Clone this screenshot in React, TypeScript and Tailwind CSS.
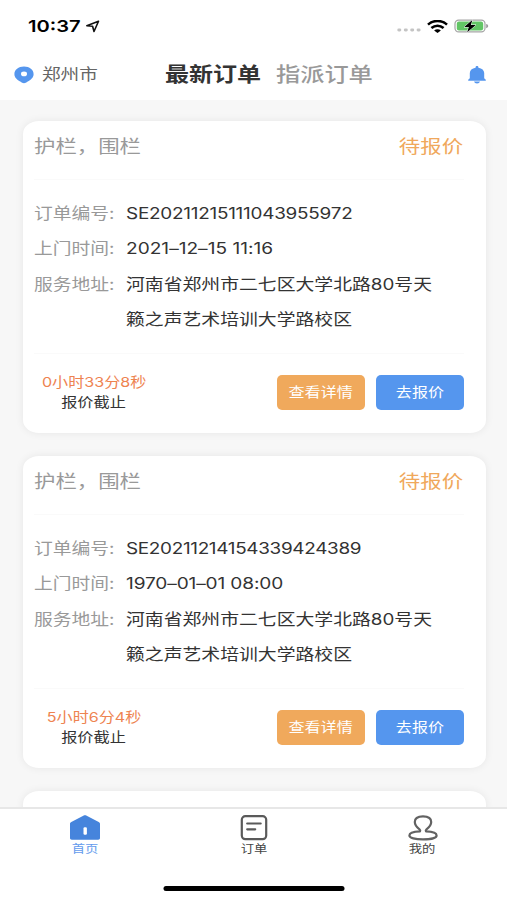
import React from "react";

type Order = {
  id: string;
  idSpacing: string;
  time: string;
  timeSpacing: string;
  countdown: string;
};

const orders: Order[] = [
  { id: "SE20211215111043955972", idSpacing: "tracking-[-0.2px]", time: "2021–12–15 11:16", timeSpacing: "tracking-[0.02px]", countdown: "0小时33分8秒" },
  { id: "SE20211214154339424389", idSpacing: "tracking-[-0.26px]", time: "1970–01–01 08:00", timeSpacing: "tracking-[-0.1px]", countdown: "5小时6分4秒" },
];

function Row({ label, children }: { label: string; children: React.ReactNode }) {
  return (
    <div className="flex h-[35.5px] items-center text-[15.5px]">
      <div className="w-[92.5px] shrink-0 text-[#999]">
        <span className="inline-block origin-left scale-x-[1.21] whitespace-nowrap">{label}</span>
      </div>
      <div className="text-[#333]">{children}</div>
    </div>
  );
}

function OrderCard({ order }: { order: Order }) {
  return (
    <article className="h-[312px] shrink-0 rounded-[16px/13px] bg-white pl-[11px] pr-[22px] shadow-[0_0_8px_rgba(0,0,0,0.07)]">
      <div className="flex h-[52px] items-center justify-between text-[17.7px]">
        <span className="origin-left scale-x-[1.21] text-[#999]">护栏，围栏</span>
        <span className="origin-right scale-x-[1.21] text-[#f0a85c]">待报价</span>
      </div>
      <div className="mt-1.5 h-px bg-[#fafafa]" />
      <div className="pt-[15.4px]">
        <Row label="订单编号:">
          <span className={`inline-block origin-left scale-x-[1.22] ${order.idSpacing}`}>{order.id}</span>
        </Row>
        <Row label="上门时间:">
          <span className={`inline-block origin-left scale-x-[1.23] ${order.timeSpacing}`}>{order.time}</span>
        </Row>
        <Row label="服务地址:">
          <span className="inline-block origin-left scale-x-[1.215] whitespace-nowrap">河南省郑州市二七区大学北路80号天</span>
        </Row>
        <Row label="">
          <span className="inline-block origin-left scale-x-[1.215] whitespace-nowrap">籁之声艺术培训大学路校区</span>
        </Row>
      </div>
      <div className="mt-[15.6px] h-px bg-[#fafafa]" />
      <div className="mt-[21px] flex h-[35px] items-center">
        <div className="flex w-[120.5px] flex-col items-center text-[13.3px] leading-5">
          <span className="scale-x-[1.21] whitespace-nowrap text-[#ee8350]">{order.countdown}</span>
          <span className="scale-x-[1.22] whitespace-nowrap text-[#333]">报价截止</span>
        </div>
        <div className="-mr-[0.5px] ml-auto flex gap-[11px] text-[13.3px] text-white">
          <button className="h-[35px] w-[88px] rounded-[5px] bg-[#f0a95c]">
            <span className="inline-block scale-x-[1.21]">查看详情</span>
          </button>
          <button className="h-[35px] w-[88px] rounded-[5px] bg-[#5596ee]">
            <span className="inline-block scale-x-[1.21]">去报价</span>
          </button>
        </div>
      </div>
    </article>
  );
}

function StatusBar() {
  return (
    <div className="flex h-[52px] items-center pl-[28px] pr-[18px]">
      <span className="inline-block origin-left scale-x-[1.22] text-[16.5px] font-semibold text-black">10:37</span>
      <svg className="ml-[13.5px] h-[13px] w-[15px]" viewBox="0 0 15 13" fill="none" stroke="#111" strokeWidth="1.6" strokeLinejoin="round">
        <path d="M13.5 1.2 1.8 5.7 7.6 6.3 9 11.5Z" />
      </svg>
      <div className="ml-auto flex items-center">
        <svg className="mt-2 h-[4px] w-[24px]" viewBox="0 0 24 4" fill="#c4c4c4">
          <rect x="0.3" y="0.5" width="4" height="3" rx="1.4" />
          <rect x="6.8" y="0.5" width="4" height="3" rx="1.4" />
          <rect x="13.2" y="0.5" width="4" height="3" rx="1.4" />
          <rect x="19.6" y="0.5" width="4" height="3" rx="1.4" />
        </svg>
        <svg className="ml-[6px] h-[13px] w-[21px]" viewBox="0 0 21 13" fill="none" stroke="#000" strokeWidth="2.6">
          <path d="M1 4.6C6.4-.2 14.6-.2 20 4.6" />
          <path d="M4.4 8.1c3.6-3 8.6-3 12.2 0" />
          <path d="M7.1 10.4c2-1.6 4.8-1.6 6.8 0L10.5 12.9Z" fill="#000" stroke="none" />
        </svg>
        <svg className="ml-[6px] h-[14px] w-[35px]" viewBox="0 0 35 14">
          <rect x="1" y="1.1" width="30" height="11.8" rx="3.6" fill="#fff" stroke="#a5a5a5" strokeWidth="1.2" />
          <rect x="2.8" y="2.6" width="26.4" height="8.8" rx="2.2" fill="#62c565" />
          <path d="M32.2 5v4.2c1.3-.4 2-1.2 2-2.1s-.7-1.7-2-2.1Z" fill="#999" />
          <path d="M18.3 1 10.2 8h4.6L13.2 13.2l8.6-7.2h-4.9Z" fill="#000" stroke="#fff" strokeWidth="1" paintOrder="stroke" />
        </svg>
      </div>
    </div>
  );
}

function TopBar() {
  return (
    <div className="flex h-[46px] items-center pl-[14px] pr-[21px]">
      <svg className="h-[18px] w-[20px]" viewBox="0 0 20 18">
        <path d="M10 .6C4.5.6.4 3.9.4 8.2c0 3.4 3 5.7 5.9 7.4 1.5.9 2.3 1.7 3.7 1.7s2.2-.8 3.7-1.7c2.9-1.7 5.9-4 5.9-7.4C19.6 3.9 15.5.6 10 .6Z" fill="#5596ee" />
        <ellipse cx="10" cy="7.9" rx="3" ry="2.4" fill="#fff" />
      </svg>
      <div className="ml-[7.5px] w-[123.5px] text-[15.5px] text-[#666]">
        <span className="inline-block origin-left scale-x-[1.2]">郑州市</span>
      </div>
      <div className="w-[111px] text-[20px] font-semibold text-[#333]">
        <span className="inline-block origin-left scale-x-[1.2] whitespace-nowrap">最新订单</span>
      </div>
      <div className="text-[20px] font-medium text-[#999]">
        <span className="inline-block origin-left scale-x-[1.21] whitespace-nowrap">指派订单</span>
      </div>
      <svg className="ml-auto h-[18px] w-[18px]" viewBox="0 0 18 18" fill="#5596ee">
        <path d="M7.6 1.3C7.6.6 8.2.1 9 .1s1.4.5 1.4 1.2v.4c3.600.6 5.800 2.500 5.800 5.300v5.200l1.600 1.500v1H.2v-1l1.600-1.500V7c0-2.800 2.200-4.700 5.800-5.300Z" />
        <path d="M6 15.500h6c-.4 1.200-1.500 1.900-3 1.900s-2.600-.7-3-1.900Z" />
      </svg>
    </div>
  );
}

function TabBar() {
  return (
    <nav className="flex h-[93.5px] shrink-0 flex-col border-t-2 border-[#e7e7e7] bg-white">
      <div className="grid grid-cols-3 pt-[6px] text-[11.1px] leading-4 text-[#444]">
        <div className="flex flex-col items-center text-[#639bed]">
          <svg className="h-[26px] w-[30px]" viewBox="0 0 30 26">
            <path d="M13.3.8c1.2-.6 2.2-.6 3.4 0l12 6.1c.9.5 1.3 1 1.3 2v14.2c0 1-.7 1.600-1.800 1.600H1.800C.7 24.700 0 24.100 0 23.100V8.900c0-1 .4-1.500 1.300-2Z" fill="#4684dc" />
            <rect x="13.5" y="12.2" width="3.4" height="7.6" rx="1.2" fill="#fff" />
          </svg>
          <span className="ml-px scale-x-[1.2]">首页</span>
        </div>
        <div className="flex flex-col items-center">
          <svg className="h-[26px] w-[28px]" viewBox="0 0 28 26" fill="none" stroke="#5a5a5a" strokeWidth="2.2" strokeLinecap="round">
            <rect x="1.8" y="1.2" width="24.4" height="23" rx="3.6" />
            <path d="M7.2 8.5h13.5M7.2 14.3h8" />
          </svg>
          <span className="ml-px scale-x-[1.2]">订单</span>
        </div>
        <div className="flex flex-col items-center">
          <svg className="h-[26px] w-[30px]" viewBox="0 0 30 26" fill="none" stroke="#626262" strokeWidth="2.2" strokeLinejoin="round">
            <path d="M12 16.4c.5-.8.3-1.400-.5-2.100C8.400 12 6.800 9.800 6.800 7c0-3.600 3.100-5.700 8.200-5.700s8.200 2.100 8.200 5.700c0 2.800-1.600 5-4.700 7.300-.8.700-1 1.300-.5 2.100 6.400.3 10.600 1.800 10.600 4 0 2.500-5.800 4-13.600 4s-13.600-1.500-13.600-4c0-2.200 4.200-3.700 10.600-4Z" />
          </svg>
          <span className="scale-x-[1.2]">我的</span>
        </div>
      </div>
      <div className="mx-auto mt-auto mb-[9px] h-[5.5px] w-[181px] translate-x-[0.5px] rounded-full bg-black" />
    </nav>
  );
}

export default function App() {
  return (
    <div className="flex h-[900px] w-[507px] flex-col overflow-hidden bg-[#f7f7f7] font-[Inter,'Noto_Sans_CJK_SC',sans-serif]">
      <header className="h-[100px] shrink-0 bg-white">
        <StatusBar />
        <TopBar />
      </header>
      <main className="flex min-h-0 flex-1 flex-col gap-[23px] overflow-hidden pl-[22.5px] pr-[21.5px] pt-[21px]">
        {orders.map((order) => (
          <OrderCard key={order.id} order={order} />
        ))}
        <div className="h-[60px] shrink-0 rounded-[16px/13px] bg-white shadow-[0_0_8px_rgba(0,0,0,0.07)]" />
      </main>
      <TabBar />
    </div>
  );
}
